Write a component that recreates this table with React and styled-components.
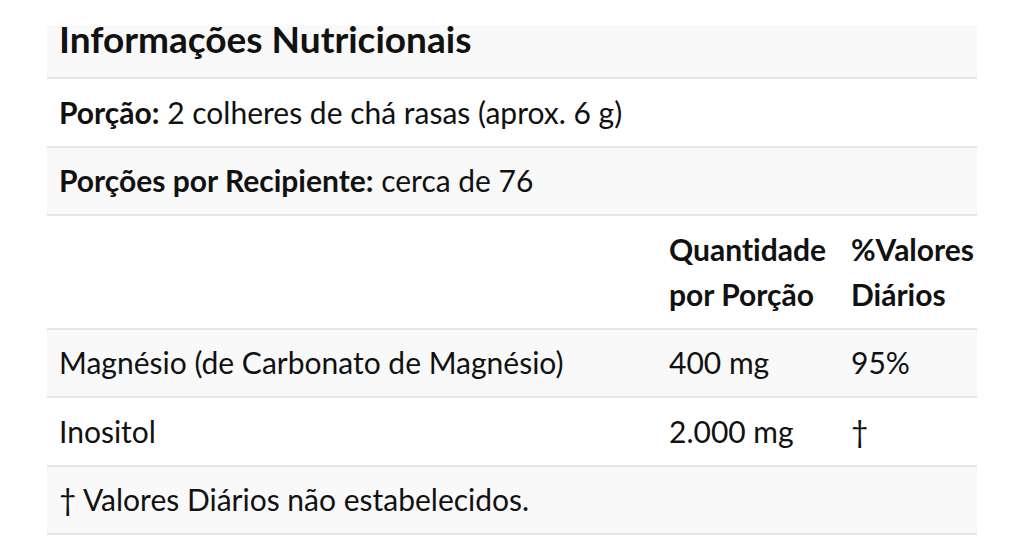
import React from "react";
import styled, { createGlobalStyle } from "styled-components";

const GlobalStyle = createGlobalStyle`
    body {
        margin: 0;
        background: #ffffff;
        font-family: Lato, "Open Sans", sans-serif;
        font-variant-ligatures: none;
        color: #111111;
    }
`;

const Page = styled.div`
    padding: 25px 0 0 47px;
`;

const Table = styled.table`
    width: 930px;
    border-collapse: collapse;
    table-layout: fixed;
    font-size: 30px;
    line-height: 45px;
`;

const Row = styled.tr`
    background: ${(p) => (p.$shaded ? "#f9f9f9" : "#ffffff")};
    border-bottom: 2px solid #e6e6e6;
`;

const Cell = styled.td`
    padding: 10.5px 0 11px 12px;
    vertical-align: middle;
    white-space: nowrap;
    font-weight: ${(p) => (p.$bold ? 700 : 400)};
`;

const TitleCell = styled.td`
    padding: 0 12px 24px;
    font-size: 37px;
    line-height: 28px;
    font-weight: 700;
`;

const Label = styled.b`
    font-weight: 700;
`;

export default function App() {
    return (
        <Page>
            <GlobalStyle />
            <Table>
                <colgroup>
                    <col style={{ width: 610 }} />
                    <col style={{ width: 182 }} />
                    <col style={{ width: 138 }} />
                </colgroup>
                <tbody>
                    <Row $shaded>
                        <TitleCell colSpan={3}>Informações Nutricionais</TitleCell>
                    </Row>
                    <Row>
                        <Cell colSpan={3}>
                            <Label>Porção:</Label> 2 colheres de chá rasas (aprox. 6 g)
                        </Cell>
                    </Row>
                    <Row $shaded>
                        <Cell colSpan={3}>
                            <Label>Porções por Recipiente:</Label> cerca de 76
                        </Cell>
                    </Row>
                    <Row>
                        <Cell />
                        <Cell $bold>
                            Quantidade
                            <br />
                            por Porção
                        </Cell>
                        <Cell $bold>
                            %Valores
                            <br />
                            Diários
                        </Cell>
                    </Row>
                    <Row $shaded>
                        <Cell>Magnésio (de Carbonato de Magnésio)</Cell>
                        <Cell>400 mg</Cell>
                        <Cell>95%</Cell>
                    </Row>
                    <Row>
                        <Cell>Inositol</Cell>
                        <Cell>2.000 mg</Cell>
                        <Cell>†</Cell>
                    </Row>
                    <Row $shaded>
                        <Cell colSpan={3}>† Valores Diários não estabelecidos.</Cell>
                    </Row>
                </tbody>
            </Table>
        </Page>
    );
}
